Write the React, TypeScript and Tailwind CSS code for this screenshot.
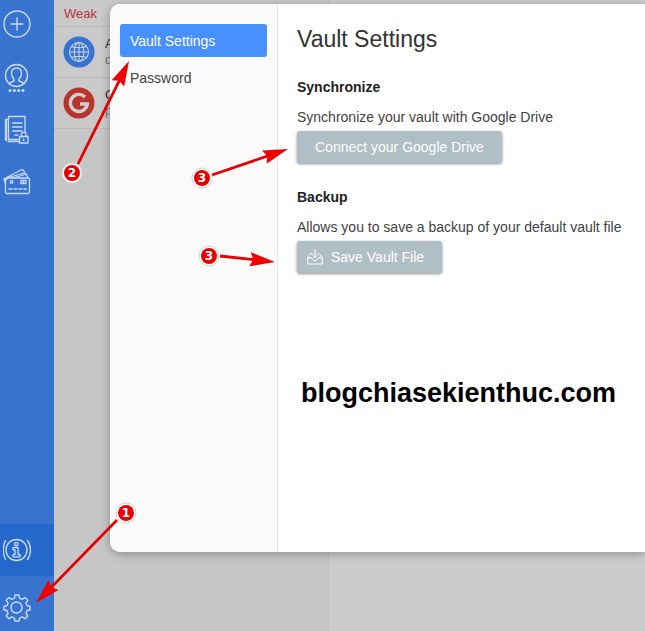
import React from 'react'

const strokeProps = {
    fill: 'none',
    stroke: 'currentColor',
    strokeLinecap: 'round' as const,
    strokeLinejoin: 'round' as const,
}

const PlusIcon = () => (
    <svg width="28" height="28" viewBox="0 0 28 28" strokeWidth="1.4" {...strokeProps}>
        <circle cx="14" cy="14" r="13" />
        <path d="M14 8v12M8 14h12" />
    </svg>
)

const IdentityIcon = () => (
    <svg width="28" height="30" viewBox="0 0 28 30" strokeWidth="1.4" {...strokeProps}>
        <circle cx="13.500" cy="12.500" r="11" />
        <path d="M13.500 5c-3.300 0-5 2.300-5 5.300 0 2.500 1.200 4.500 2.500 5.700v2c-1.800.8-4 1.200-5 3M13.500 5c3.300 0 5 2.300 5 5.300 0 2.500-1.200 4.500-2.500 5.700v2c1.800.8 4 1.200 5 3" />
        <path d="M7 27.500h.1M11.300 27.500h.1M15.600 27.500h.1M19.900 27.500h.1" strokeWidth="3" />
    </svg>
)

const NotesIcon = () => (
    <svg width="28" height="30" viewBox="0 0 28 30" strokeWidth="1.3" {...strokeProps}>
        <path d="M15.500 26.500H5M3.500 25.500V4.500H2.500V25h1M5.500 24.500v-23H22V17M3.500 4.500h2M5.500 24.500H15" />
        <path d="M9.500 8h9.500M9.500 12h9.500M9.500 16H19M12 20h3" />
        <path d="M16.500 21.500H25V28h-8.500zM18.300 21.500v-1.700a2.400 2.400 0 0 1 4.800 0v1.700M20.700 24v1.500" />
    </svg>
)

const CardsIcon = () => (
    <svg width="30" height="28" viewBox="0 0 30 28" strokeWidth="1.3" {...strokeProps}>
        <rect x="2.500" y="10" width="24" height="15.500" rx="1.500" />
        <path d="M2.500 15.500.8 11l18-9.500 1.700.8 1.500 3 1.300.8 1.500 3.500M4 10l17-5M10 10l12-3.500M1.800 13.500 4.500 10" />
        <circle cx="8.500" cy="14" r="1.300" />
        <path d="M18 12.500h5v3h-5zM20.500 12.500v3M6 21h3M11 21h3M16 21h3M21 21h2.500" />
    </svg>
)

const InfoIcon = () => (
    <svg width="30" height="26" viewBox="0 0 30 26" strokeWidth="1.3" {...strokeProps}>
        <circle cx="13.500" cy="13" r="10.500" />
        <path d="M2.500 3.500c-3 5.500-3 13.500 0 19M24.500 3.500c4 5.500 4 13.500 0 19" />
        <circle cx="13.300" cy="7" r="1.700" />
        <path d="M10 10.500h5v7h2v2.300h-7v-2.300h2v-4.700h-2z" />
    </svg>
)

const GearIcon = () => (
    <svg width="28" height="28" viewBox="0 0 28 28" strokeWidth="1.4" {...strokeProps}>
        <circle cx="13.500" cy="13.500" r="5.500" />
        <path d="M11.500 4.200 12 1h4l.5 3.200 2.900 1.200 2.600-1.900 2.800 2.800-1.900 2.600 1.200 2.900 2.900.4v3.800l-2.900.5-1.200 2.900 1.900 2.600-2.800 2.800-2.600-1.900-2.900 1.200L16 27h-4l-.5-2.900-2.900-1.200L6 24.800 3.200 22l1.900-2.600-1.200-2.900L1 16v-3.800l2.900-.4 1.200-2.900L3.200 6.300 6 3.500l2.600 1.900z" />
    </svg>
)

const GlobeIcon = () => (
    <svg className="text-[#c8d3e6]" width="32" height="32" viewBox="0 0 32 32" strokeWidth="1.1" {...strokeProps}>
        <circle cx="16" cy="16" r="15.500" fill="#3874cf" stroke="none" />
        <circle cx="16" cy="16" r="9.500" />
        <ellipse cx="16" cy="16" rx="4.800" ry="9.500" />
        <path d="M16 6.500v19M6.500 16h19M8.500 10.500c4 1.600 11 1.600 15 0M8.500 21.500c4-1.600 11-1.600 15 0" />
    </svg>
)

const GoogleIcon = () => (
    <svg width="32" height="32" viewBox="0 0 32 32">
        <circle cx="16" cy="16" r="15.500" fill="#b8352d" />
        <path d="M22 10A8.500 8.500 0 1 0 24.300 17H17" fill="none" stroke="#cfcfcf" strokeWidth="3.400" />
    </svg>
)

const SaveIcon = () => (
    <svg width="16" height="16" viewBox="0 0 16 16" strokeWidth="1" {...strokeProps}>
        <path d="M5 4.500H4L.7 9v6h14.600V9L12 4.500h-1M.7 9H5c.4 2 1.500 2.800 3 2.800s2.600-.8 3-2.800h4.300M8 .7v7.500M5.500 6 8 8.300 10.500 6" />
    </svg>
)

const SideButton = ({ label, className, children }: {
    label: string
    className: string
    children: React.ReactNode
}) => (
    <button aria-label={label} className={`flex w-full items-center pl-[3px] text-[#c9dbf6] ${className}`}>
        {children}
    </button>
)

const AccountRow = ({ icon, name, login }: {
    icon: React.ReactNode
    name: string
    login: string
}) => (
    <li className="flex h-[51px] items-center gap-[10px] border-b border-[#b9b9b9] bg-[#c9c9c9] pl-[9px]">
        {icon}
        <div className="text-[13px] leading-4">
            <p className="text-[#333]">{name}</p>
            <p className="text-[#777]">{login}</p>
        </div>
    </li>
)

const Section = ({ title, text, children }: {
    title: string
    text: string
    children: React.ReactNode
}) => (
    <section className="mt-6 flex flex-col items-start">
        <h2 className="text-sm font-bold text-[#212121]">{title}</h2>
        <p className="mt-[10px] mb-1 text-sm text-[#424242]">{text}</p>
        {children}
    </section>
)

const actionButton = 'flex h-8 items-center rounded-[3px] bg-[#b0bec5] text-sm text-white shadow-[0_1px_3px_rgba(0,0,0,0.45)]'

const arrows = [
    { n: 1, x: 126, y: 513, from: [117, 520], to: [36, 603] },
    { n: 2, x: 72, y: 173, from: [78, 164], to: [129, 61] },
    { n: 3, x: 202, y: 178, from: [212, 175], to: [288, 149] },
    { n: 3, x: 209, y: 256, from: [220, 256], to: [275, 262] },
]

const Annotations = () => (
    <svg className="pointer-events-none absolute top-0 left-0" width="645" height="631" viewBox="0 0 645 631">
        <defs>
            <marker id="head" markerUnits="userSpaceOnUse" markerWidth="26" markerHeight="16" refX="25" refY="8" orient="auto">
                <path d="M25 8 0 1l3 7-3 7z" fill="#f20000" />
            </marker>
        </defs>
        {arrows.map((a, i) => (
            <g key={i}>
                <path
                    d={`M${a.from[0]} ${a.from[1]}L${a.to[0]} ${a.to[1]}`}
                    stroke="#e60000"
                    strokeWidth="2.800"
                    strokeDasharray={`${Math.hypot(a.to[0] - a.from[0], a.to[1] - a.from[1]) - 18} 99`}
                    markerEnd="url(#head)"
                />
                <circle cx={a.x} cy={a.y} r="10" fill="#fff" stroke="#d4d4d4" strokeWidth="1" />
                <circle cx={a.x} cy={a.y} r="8" fill="#e80000" />
                <text x={a.x} y={a.y + 4} textAnchor="middle" fill="#fff" className="font-['DejaVu_Sans',sans-serif] text-[12px] font-bold">
                    {a.n}
                </text>
            </g>
        ))}
    </svg>
)

const App = () => {
    return (
        <div className="relative flex min-h-screen overflow-hidden bg-[#cccccc] font-['Liberation_Sans',Arial,sans-serif]">
            <nav className="flex w-[54px] shrink-0 flex-col bg-[#3874cf]">
                <SideButton label="Add" className="h-12"><PlusIcon /></SideButton>
                <SideButton label="Identities" className="h-[60px]"><IdentityIcon /></SideButton>
                <SideButton label="Secure notes" className="h-11"><NotesIcon /></SideButton>
                <SideButton label="Wallet" className="h-[60px]"><CardsIcon /></SideButton>
                <div className="grow" />
                <SideButton label="About" className="h-[52px] bg-[#2468cc]"><InfoIcon /></SideButton>
                <SideButton label="Settings" className="h-[55px] pt-2"><GearIcon /></SideButton>
            </nav>

            <aside className="w-[275px] shrink-0 border-r border-[#c0c0c0] bg-[#c6c6c6]">
                <h3 className="h-[27px] border-b border-[#b9b9b9] bg-[#c9c9c9] pl-[10px] text-[13px] leading-7 text-[#b8353a]">Weak</h3>
                <ul>
                    <AccountRow icon={<GlobeIcon />} name="A" login="d" />
                    <AccountRow icon={<GoogleIcon />} name="G" login="p" />
                </ul>
            </aside>

            <div role="dialog" aria-label="Settings" className="absolute top-1 right-0 bottom-[79px] left-[110px] flex overflow-hidden rounded-l-[10px] bg-white shadow-[0_2px_10px_rgba(0,0,0,0.3)]">
                <nav className="flex w-[168px] shrink-0 flex-col gap-1 border-r border-[#e6e6e6] bg-[#fafafa] px-[10px] pt-5 text-sm">
                    <a href="#vault" className="flex h-[33px] items-center rounded-[3px] bg-[#4890ff] px-[10px] text-white">Vault Settings</a>
                    <a href="#password" className="flex h-[33px] items-center rounded-[3px] px-[10px] text-[#424242]">Password</a>
                </nav>
                <main className="grow pt-[21px] pl-[19px]">
                    <h1 className="text-[23px] leading-7 text-[#333]">Vault Settings</h1>
                    <Section title="Synchronize" text="Synchronize your vault with Google Drive">
                        <button className={`${actionButton} px-[18px]`}>Connect your Google Drive</button>
                    </Section>
                    <Section title="Backup" text="Allows you to save a backup of your default vault file">
                        <button className={`${actionButton} gap-2 pr-[18px] pl-[10px]`}>
                            <SaveIcon />
                            Save Vault File
                        </button>
                    </Section>
                    <p className="mt-[104px] pl-1 text-[27px] leading-8 font-bold text-black">blogchiasekienthuc.com</p>
                </main>
            </div>

            <Annotations />
        </div>
    )
}

export default App
